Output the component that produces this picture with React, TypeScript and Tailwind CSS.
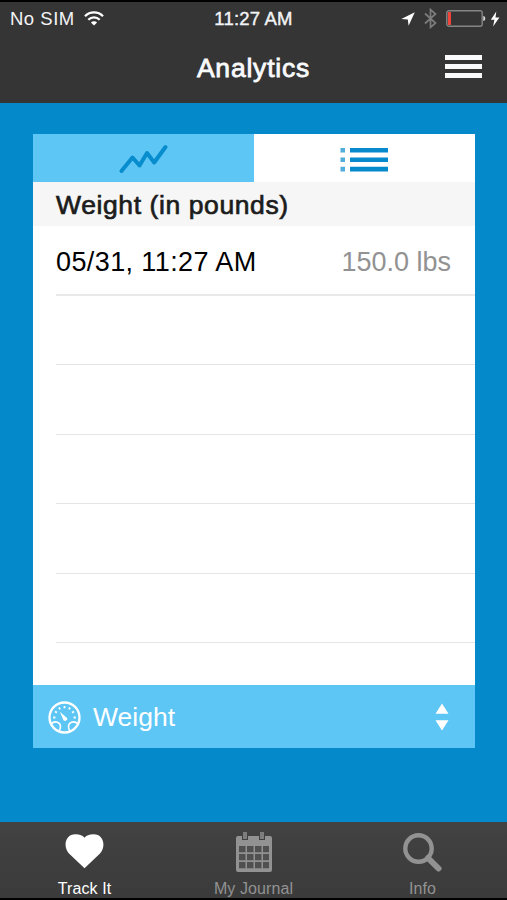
import type { ReactNode } from "react";

const emptyRows = [1, 2, 3, 4, 5];

function StatusBar() {
    return (
        <div className="grid h-[27px] grid-cols-3 items-center pt-[6px] text-[18.5px] leading-none text-gray-100">
            <div className="flex items-center gap-[9px] pl-[10px]">
                <span className="whitespace-nowrap tracking-[0.5px]">No SIM</span>
                <svg className="mb-[3px]" width="20" height="15" viewBox="0 0 20 15" fill="none" stroke="#fff" strokeWidth="2.3">
                    <path d="M1 5.2C6 .1 14 .1 19 5.2" />
                    <path d="M4.3 8.7C7.5 5.5 12.5 5.5 15.7 8.7" />
                    <path d="M10 14.6 6.9 11.4C8.5 9.9 11.5 9.9 13.1 11.4Z" fill="#fff" stroke="none" />
                </svg>
            </div>
            <span className="text-center whitespace-nowrap tracking-[0.2px] [-webkit-text-stroke:0.4px]">11:27 AM</span>
            <div className="flex items-center justify-end pr-[7px] pb-[2px]">
                <svg width="14" height="14" viewBox="0 0 14 14" fill="#fff">
                    <path d="M13.8.2 7.6 13.8 6.8 7.4.3 7Z" />
                </svg>
                <svg className="ml-[9px]" width="13" height="21" viewBox="0 0 13 21" fill="none" stroke="#7d7d7d" strokeWidth="1.7">
                    <path d="M1 5.5 11.5 15 6.5 19.4V1.6L11.5 6 1 15.5" />
                </svg>
                <svg className="ml-[9px]" width="40" height="17" viewBox="0 0 40 17">
                    <rect x=".8" y=".8" width="35.4" height="15.4" rx="2" fill="none" stroke="#858585" strokeWidth="1.4" />
                    <path d="M2 2h3v13H2z" fill="#ef443a" />
                    <path d="M37.3 6c2.6.3 2.6 4.7 0 5z" fill="#ddd" />
                </svg>
                <svg className="ml-[4px]" width="10" height="16" viewBox="0 0 10 16" fill="#fff">
                    <path d="M6.3.5.8 8.8H4.4L3.1 15.5 9.4 6.4H5.5Z" />
                </svg>
            </div>
        </div>
    );
}

function TabItem({ label, active, children }: { label: string; active?: boolean; children: ReactNode }) {
    return (
        <div className={active ? "flex flex-1 flex-col items-center text-white" : "flex flex-1 flex-col items-center text-[#929292]"}>
            <div className="flex h-[58px] items-center">{children}</div>
            <span className="text-[16px] leading-[18px] tracking-[0.1px]">{label}</span>
        </div>
    );
}

export default function App() {
    return (
        <div className="flex h-[900px] w-[507px] flex-col bg-[#048acb] font-['Liberation_Sans',Arial,sans-serif]">
            <header className="h-[103px] border-t-2 border-black bg-[#353535]">
                <StatusBar />
                <div className="grid h-[74px] grid-cols-3 items-center">
                    <h1 className="col-start-2 pt-1 text-center text-[26.5px] leading-none tracking-[0.8px] text-gray-50 [-webkit-text-stroke:0.8px]">Analytics</h1>
                    <div className="mr-[25px] flex flex-col gap-1 justify-self-end pt-px">
                        <div className="h-[5px] w-[37px] bg-gray-50" />
                        <div className="h-[5px] w-[37px] bg-gray-50" />
                        <div className="h-[5px] w-[37px] bg-gray-50" />
                    </div>
                </div>
            </header>

            <main className="flex-1 px-8 pt-[31px]">
                <div className="ml-px flex h-[614px] w-[442px] flex-col bg-white">
                    <div className="flex h-12 shrink-0">
                        <div className="flex w-1/2 items-center justify-center bg-[#5ec6f5]">
                            <svg width="50" height="32" viewBox="0 0 50 32" fill="none" stroke="#078dcd" strokeWidth="4" strokeLinecap="round" strokeLinejoin="round">
                                <path d="M2.5 29 13.5 15.5 20.5 23.5 28 11 35.2 20.5 46.5 5" />
                            </svg>
                        </div>
                        <div className="flex w-1/2 items-center justify-center pt-[3px] pr-[2px]">
                            <svg width="50" height="26" viewBox="0 0 50 26" fill="#078acb">
                                <path d="M11 1h38v4.6H11zM11 10.4h38V15H11zM11 19.8h38v4.6H11z" />
                                <path d="M1.5 1H6v4.6H1.5zM1.5 10.4H6V15H1.5zM1.5 19.8H6v4.6H1.5z" opacity=".7" />
                            </svg>
                        </div>
                    </div>

                    <h2 className="h-11 shrink-0 bg-[#f6f6f6] pl-[23px] text-[26.5px] leading-[47px] tracking-[0.6px] text-[#1c1c1c] [-webkit-text-stroke:0.7px]">Weight (in pounds)</h2>

                    <div className="min-h-0 flex-1 overflow-hidden pl-[23px]">
                        <div className="flex h-[70px] items-center justify-between border-b-2 border-[#e9e9e9] pt-[5px] pr-6 text-[27px] text-black">
                            <span className="tracking-[0.4px]">05/31, 11:27 AM</span>
                            <span className="text-[#929292]">150.0 lbs</span>
                        </div>
                        <div className="-mt-[0.5px]">
                            {emptyRows.map((row) => (
                                <div key={row} className="h-[69.5px] border-b border-[#e4e4e4]" />
                            ))}
                        </div>
                    </div>

                    <div className="flex h-[63px] shrink-0 items-center bg-[#5ec6f5] pr-[26px] pl-[15px] text-[26.5px] text-white">
                        <svg className="mt-px" width="33" height="33" viewBox="0 0 33 33" fill="none" stroke="#fff" strokeWidth="2.3">
                            <circle cx="16.5" cy="16.5" r="15" />
                            <path d="M3.2 22.8C7 19.2 13 21.2 12.4 26.5 12.2 28.5 11.4 29.6 10.6 30.4M29.8 22.8C26 19.2 20 21.2 20.6 26.5 20.8 28.5 21.6 29.6 22.4 30.4" strokeWidth="1.6" />
                            <path d="M5.2 16.5h2.2M7 10.5l1.9 1.1M11 6.5l1.1 1.9M16.5 5v2.3M22 6.5l-1.1 1.9M26 10.5l-1.9 1.1M27.8 16.5h-2.2" strokeWidth="1.8" />
                            <path d="M11.8 10.7 19.3 17.2A2.3 2.3 0 0 1 15.5 19.3Z" fill="#fff" stroke="none" />
                        </svg>
                        <span className="ml-3 flex-1 pt-[3px]">Weight</span>
                        <svg width="14" height="28" viewBox="0 0 14 28" fill="#fff">
                            <path d="M7 .5 13.5 10.8H.5ZM.5 17.2h13L7 27.5Z" />
                        </svg>
                    </div>
                </div>
            </main>

            <nav className="flex h-[78px] border-b-2 border-black bg-gradient-to-b from-[#424242] to-[#3b3b3b]">
                <TabItem label="Track It" active>
                    <svg width="41" height="36" viewBox="0 0 40 36" fill="#fff">
                        <path d="M20 35.3 4.5 20.5C-1.5 14 .2 1.2 11 1.2c4.4 0 7.4 1.2 9 3.6 1.6-2.4 4.6-3.6 9-3.6 10.8 0 12.5 12.8 6.5 19.3Z" />
                    </svg>
                </TabItem>
                <TabItem label="My Journal">
                    <svg className="mt-[2px]" width="38" height="42" viewBox="0 0 38 42" fill="#929292">
                        <path d="M8 1h4v7H8zM25 1h4v7h-4z" opacity=".75" />
                        <path d="M1 7q0-2 2-2h4v4h6V5h11v4h6V5h5q2 0 2 2v32q0 2-2 2H3q-2 0-2-2Z" />
                        <path d="M4 15h6.5v6.3H4zM12 15h6.5v6.3H12zM20 15h6.5v6.3H20zM28 15h6v6.3h-6zM4 23h6.5v6.3H4zM12 23h6.5v6.3H12zM20 23h6.5v6.3H20zM28 23h6v6.3h-6zM4 31h6.5v6.3H4zM12 31h6.5v6.3H12zM20 31h6.5v6.3H20zM28 31h6v6.3h-6z" fill="#505050" />
                    </svg>
                </TabItem>
                <TabItem label="Info">
                    <svg className="mt-[2px] mr-[2px]" width="40" height="40" viewBox="0 0 40 40" fill="none" stroke="#929292">
                        <circle cx="16.5" cy="16.5" r="13.2" strokeWidth="4.4" />
                        <path d="M26 26 36.5 36.5" strokeWidth="6" strokeLinecap="round" />
                    </svg>
                </TabItem>
            </nav>
        </div>
    );
}
